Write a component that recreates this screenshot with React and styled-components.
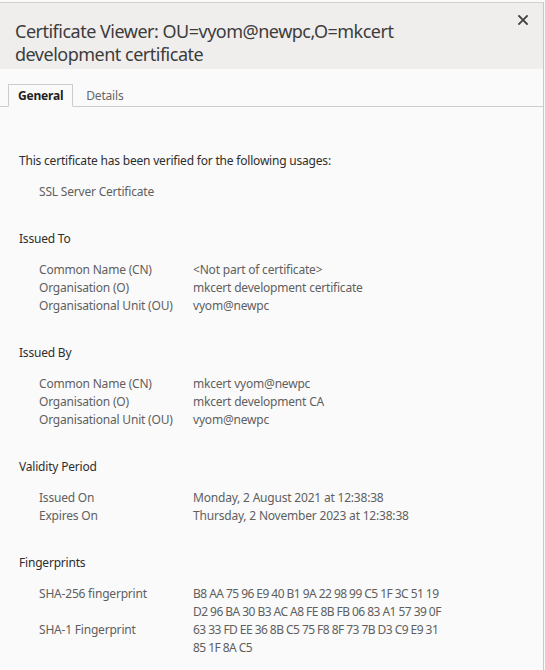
import React from 'react';
import styled, { createGlobalStyle } from 'styled-components';

// ============================================================
//  GLOBAL
// ============================================================
const GlobalStyle = createGlobalStyle`
  html, body {
    margin: 0;
    padding: 0;
    background: #fafafa;
  }
  body {
    font-family: "Noto Sans", "Open Sans", sans-serif;
  }
`;

// ============================================================
//  STYLED COMPONENTS
// ============================================================
const Dialog = styled.div`
  box-sizing: border-box;
  width: 544px;
  height: 668px;
  margin-top: 2px;
  border-top: 1px solid #d0d0d0;
  border-right: 1px solid #c8c8c8;
  background: #fafafa;
  display: flex;
  flex-direction: column;
`;

const Header = styled.div`
  position: relative;
  background: #efeeed;
  height: 66px;
  box-sizing: border-box;
  padding: 17px 40px 0 15px;
`;

const Title = styled.h1`
  margin: 0;
  font-size: 18px;
  font-weight: 400;
  line-height: 23px;
  color: #3c3c3c;
  letter-spacing: -0.5px;
`;

const CloseButton = styled.button`
  position: absolute;
  top: 10px;
  right: 13px;
  width: 14px;
  height: 14px;
  padding: 0;
  border: 0;
  background: transparent;
  display: flex;
  align-items: center;
  justify-content: center;
  cursor: pointer;
`;

const TabBar = styled.div`
  display: flex;
  align-items: flex-end;
  height: 37px;
  padding-left: 8px;
  border-bottom: 1px solid #cdcdcd;
`;

const Tab = styled.div`
  box-sizing: border-box;
  height: 23px;
  padding: 0 ${({ $active }) => ($active ? '9px' : '12px')};
  margin-bottom: -1px;
  display: flex;
  align-items: center;
  font-size: 12px;
  letter-spacing: -0.2px;
  font-weight: ${({ $active }) => ($active ? 700 : 400)};
  color: ${({ $active }) => ($active ? '#222' : '#666')};
  background: ${({ $active }) => ($active ? '#fafafa' : 'transparent')};
  border: 1px solid ${({ $active }) => ($active ? '#cdcdcd' : 'transparent')};
  border-bottom-color: ${({ $active }) => ($active ? '#fafafa' : 'transparent')};
`;

const Body = styled.div`
  padding: 45px 19px 0 19px;
  display: flex;
  flex-direction: column;
  gap: 29px;
  font-size: 12px;
  line-height: 18px;
  letter-spacing: -0.2px;
`;

const Section = styled.section`
  display: flex;
  flex-direction: column;
  gap: 13px;
`;

const Heading = styled.div`
  color: #2e2e2e;
`;

const Rows = styled.div`
  padding-left: 20px;
  display: grid;
  grid-template-columns: 154px 1fr;
  color: #5f5f5f;
`;

const Label = styled.div``;

const Value = styled.div`
  white-space: pre-line;
  letter-spacing: ${({ $hex }) => ($hex ? '-0.55px' : '-0.2px')};
`;

const Usage = styled.div`
  padding-left: 20px;
  color: #5f5f5f;
`;

// ============================================================
//  DATA
// ============================================================
const sections = [
  {
    title: 'Issued To',
    rows: [
      ['Common Name (CN)', '<Not part of certificate>'],
      ['Organisation (O)', 'mkcert development certificate'],
      ['Organisational Unit (OU)', 'vyom@newpc'],
    ],
  },
  {
    title: 'Issued By',
    rows: [
      ['Common Name (CN)', 'mkcert vyom@newpc'],
      ['Organisation (O)', 'mkcert development CA'],
      ['Organisational Unit (OU)', 'vyom@newpc'],
    ],
  },
  {
    title: 'Validity Period',
    rows: [
      ['Issued On', 'Monday, 2 August 2021 at 12:38:38'],
      ['Expires On', 'Thursday, 2 November 2023 at 12:38:38'],
    ],
  },
  {
    title: 'Fingerprints',
    hex: true,
    rows: [
      [
        'SHA-256 fingerprint',
        'B8 AA 75 96 E9 40 B1 9A 22 98 99 C5 1F 3C 51 19\nD2 96 BA 30 B3 AC A8 FE 8B FB 06 83 A1 57 39 0F',
      ],
      [
        'SHA-1 Fingerprint',
        '63 33 FD EE 36 8B C5 75 F8 8F 73 7B D3 C9 E9 31\n85 1F 8A C5',
      ],
    ],
  },
];

// ============================================================
//  COMPONENT
// ============================================================
const App = () => (
  <>
    <GlobalStyle />
    <Dialog>
      <Header>
        <Title>
          Certificate Viewer: OU=vyom@newpc,O=mkcert
          <br />
          development certificate
        </Title>
        <CloseButton aria-label="Close">
          <svg width="10" height="10" viewBox="0 0 10 10">
            <path d="M1 1 L9 9 M9 1 L1 9" stroke="#444" strokeWidth="1.8" strokeLinecap="square" />
          </svg>
        </CloseButton>
      </Header>

      <TabBar>
        <Tab $active>General</Tab>
        <Tab>Details</Tab>
      </TabBar>

      <Body>
        <Section>
          <Heading>This certificate has been verified for the following usages:</Heading>
          <Usage>SSL Server Certificate</Usage>
        </Section>

        {sections.map((s) => (
          <Section key={s.title}>
            <Heading>{s.title}</Heading>
            <Rows>
              {s.rows.map(([label, value]) => (
                <React.Fragment key={label}>
                  <Label>{label}</Label>
                  <Value $hex={s.hex}>{value}</Value>
                </React.Fragment>
              ))}
            </Rows>
          </Section>
        ))}
      </Body>
    </Dialog>
  </>
);

export default App;
